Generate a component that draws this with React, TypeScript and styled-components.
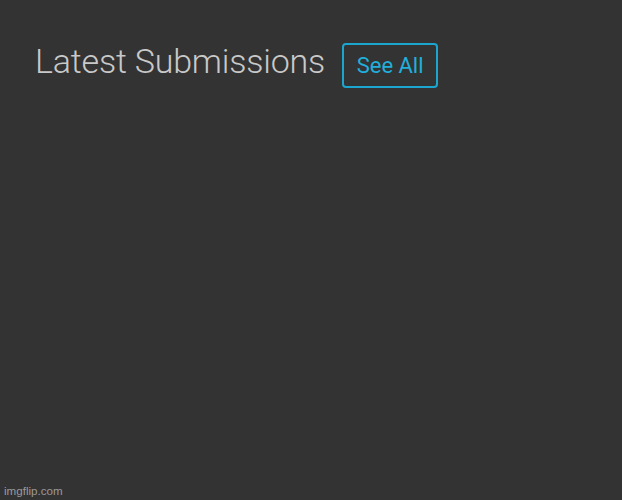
import React from "react";
import styled, { createGlobalStyle } from "styled-components";

const Global = createGlobalStyle`
  html, body { margin: 0; padding: 0; background: #333333; }
  body { font-family: Roboto, "Liberation Sans", sans-serif; }
`;

const Page = styled.div`
  width: 622px;
  height: 500px;
  background: #333333;
  display: flex;
  flex-direction: column;
  justify-content: space-between;
  box-sizing: border-box;
  padding: 43px 0 0 35px;
`;

const Header = styled.div`
  display: flex;
  align-items: center;
  gap: 17px;
`;

const Title = styled.h2`
  margin: 0;
  font-family: Roboto, "Liberation Sans", sans-serif;
  font-weight: 300;
  font-size: 34px;
  letter-spacing: -0.2px;
  line-height: 36px;
  color: #c9c9c9;
  position: relative;
  top: -5px;
`;

const SeeAll = styled.button`
  box-sizing: border-box;
  width: 96px;
  height: 45px;
  border: 2px solid #1ba6cf;
  border-radius: 4px;
  background: transparent;
  color: #21afdb;
  font-family: Roboto, "Liberation Sans", sans-serif;
  font-size: 22px;
  font-weight: 400;
  padding: 0;
  display: flex;
  align-items: center;
  justify-content: center;
`;

const Watermark = styled.div`
  margin: 0 0 2px -31px;
  font-family: "Liberation Sans", Arial, sans-serif;
  font-size: 11.6px;
  color: #9a9a9a;
  line-height: 14px;
`;

export default function App() {
  return (
    <>
      <Global />
      <Page>
        <Header>
          <Title>Latest Submissions</Title>
          <SeeAll>See All</SeeAll>
        </Header>
        <Watermark>imgflip.com</Watermark>
      </Page>
    </>
  );
}
